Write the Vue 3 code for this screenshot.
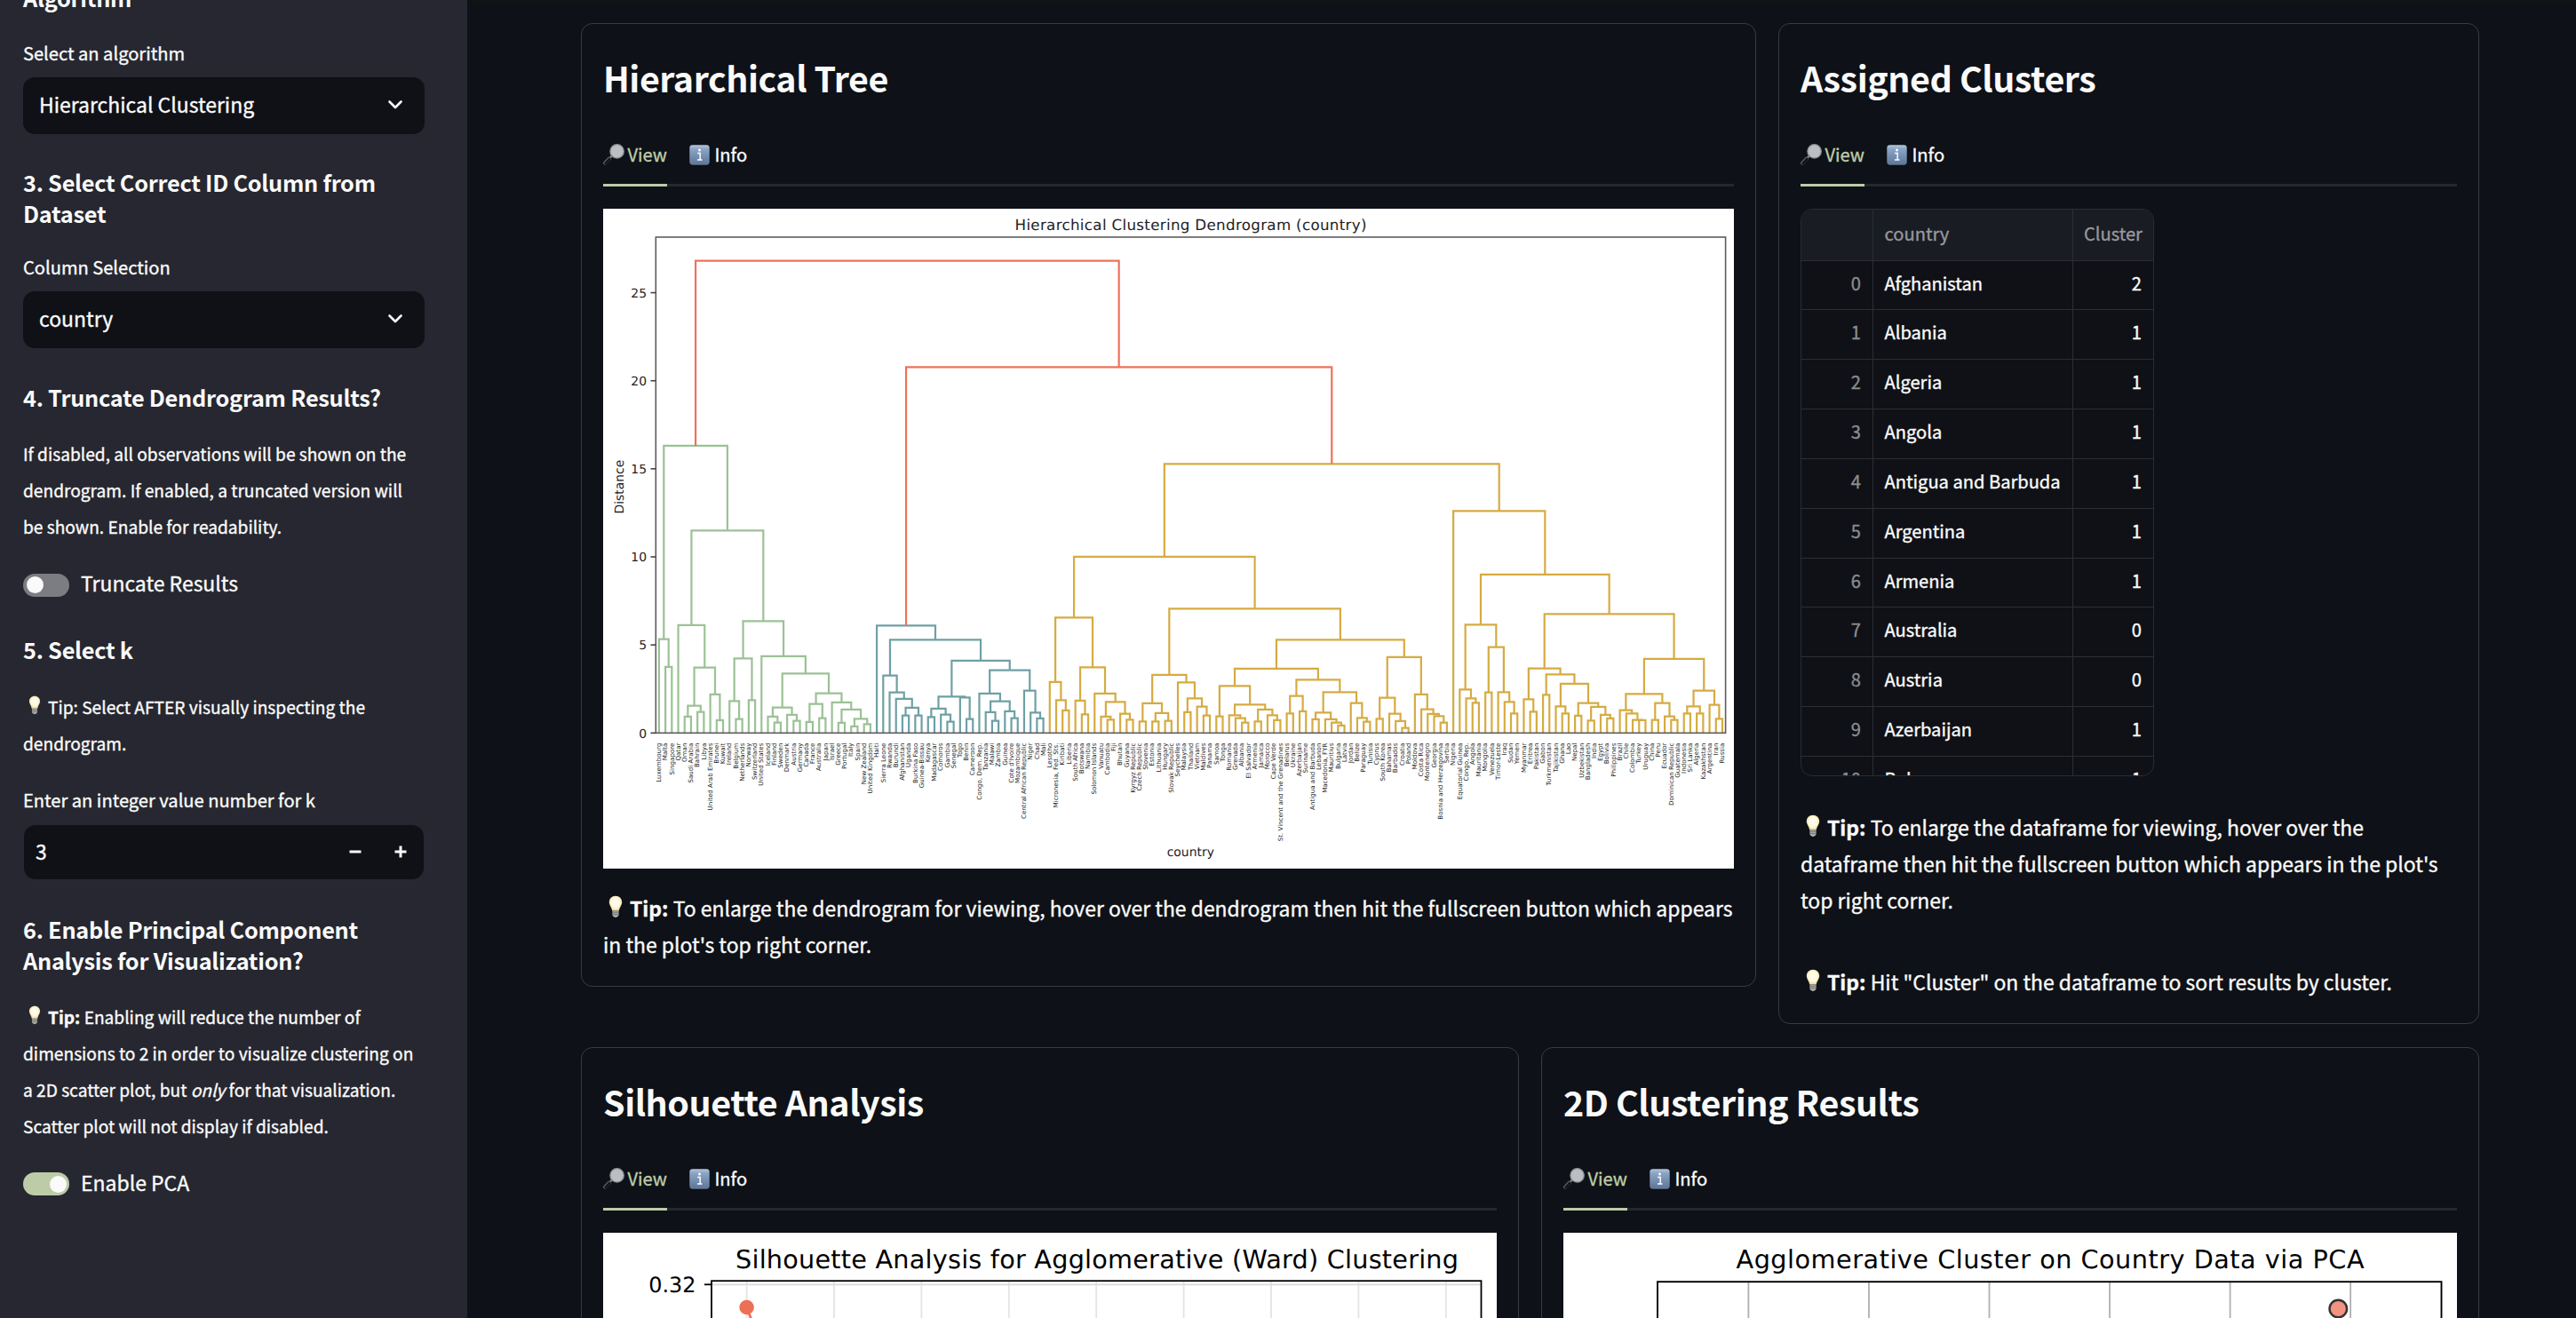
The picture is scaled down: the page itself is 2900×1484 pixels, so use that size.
<script setup>
// Merge tree: a string is a leaf, [left, right, height] is a merge.
// Heights are in chart units, 59.5 units per distance step of 1.
const western = [
  ['Luxembourg', ['Malta', 'Singapore', 223], 317],
  [
    ['Qatar', [[['Oman', 'Saudi Arabia', 55], ['Bahrain', 'Libya', 71], 92], ['United Arab Emirates', ['Brunei', 'Kuwait', 43], 130], 221], 364],
    [
      [['Ireland', ['Belgium', 'Netherlands', 47], 108], ['Norway', 'Switzerland', 111], 252],
      ['United States', [
        [['Iceland', ['Finland', 'Sweden', 35], 55], ['Denmark', ['Austria', 'Germany', 41], 61], 86],
        [
          [['Canada', 'France', 37], ['Australia', 'Japan', 50], 98],
          ['Israel', [['Greece', 'Portugal', 34], [['Italy', 'Spain', 22], ['New Zealand', 'United Kingdom', 30], 48], 79], 103],
          134],
        201], 259],
      378],
    684],
  970]

const african = ['Haiti', [
  ['Sierra Leone', ['Rwanda', ['Burundi', [['Afghanistan', 'Uganda', 59], ['Burkina Faso', 'Guinea-Bissau', 59], 85], 115], 137], 194],
  [
    [[['Kenya', 'Madagascar', 54], ['Comoros', ['Gambia', 'Senegal', 38], 62], 82], ['Togo', ['Benin', 'Cameroon', 47], 120], 123],
    [
      ['Congo, Dem. Rep.', [['Tanzania', ['Malawi', 'Zambia', 41], 70], ['Guinea', ["Cote d'Ivoire", 'Mozambique', 50], 73], 107], 133],
      ['Central African Republic', ['Niger', ['Chad', 'Mali', 49], 69], 143],
      212],
    244],
  315], 363]

const islands = [
  ['Lesotho', ['Micronesia, Fed. Sts.', ['Kiribati', 'Liberia', 76], 111], 172],
  [
    ['South Africa', ['Botswana', 'Namibia', 63], 109],
    ['Solomon Islands', [['Vanuatu', ['Cambodia', 'Fiji', 45], 55], ['Bhutan', ['Guyana', 'Kyrgyz Republic', 45], 65], 105], 133],
    222],
  390]

const middle = [
  [
    [['Czech Republic', 'Slovenia', 39], [['Estonia', 'Lithuania', 39], ['Hungary', 'Slovak Republic', 41], 67], 100],
    ['Seychelles', [['Malaysia', 'Thailand', 70], ['Vietnam', ['Maldives', 'Panama', 59], 89], 117], 171],
    196],
  [
    [
      [
        ['Samoa', 'Tonga', 56],
        [['Romania', ['Grenada', ['Albania', 'El Salvador', 35], 50], 60], [['Armenia', 'Jamaica', 39], ['Morocco', ['Cape Verde', 'St. Vincent and the Grenadines', 43], 60], 79], 96],
        159],
      [
        [['Belarus', 'Ukraine', 66], ['Azerbaijan', 'Suriname', 73], 125],
        [
          [['Antigua and Barbuda', 'Lebanon', 46], ['Macedonia, FYR', ['Mauritius', ['Bulgaria', 'Latvia', 25], 35], 46], 69],
          ['Jordan', ['Belize', ['Paraguay', 'Tunisia', 38], 51], 101],
          138],
        180],
      217],
    [
      [['Cyprus', 'South Korea', 48], ['Bahamas', ['Barbados', ['Croatia', 'Poland', 17], 40], 65], 119],
      ['Moldova', ['Costa Rica', ['Montenegro', ['Georgia', ['Bosnia and Herzegovina', 'Serbia', 35], 57], 64], 80], 130],
      256],
    315],
  420]

const developing = ['Nigeria', [
  [
    ['Equatorial Guinea', ['Congo, Rep.', ['Angola', 'Mauritania', 102], 117], 147],
    [['Mongolia', 'Venezuela', 137], ['Timor-Leste', ['Iraq', ['Sudan', 'Yemen', 66], 105], 138], 290],
    366],
  [
    [
      ['Myanmar', ['Eritrea', 'Pakistan', 72], 114],
      [
        ['Gabon', 'Turkmenistan', 129],
        [
          ['Tajikistan', ['Ghana', 'Lao', 66], 90],
          [['Nepal', 'Uzbekistan', 58], [['Bangladesh', 'India', 42], ['Egypt', ['Bolivia', 'Philippines', 49], 61], 88], 101],
          166],
        198],
      218],
    [
      [
        ['Brazil', ['Chile', ['Colombia', ['Turkey', 'Uruguay', 43], 44], 66], 77],
        [['China', 'Peru', 44], ['Ecuador', ['Dominican Republic', 'Guatemala', 44], 56], 101],
        132],
      [[['Indonesia', 'Sri Lanka', 66], ['Algeria', 'Kazakhstan', 66], 90], ['Argentina', ['Iran', 'Russia', 48], 95], 143],
      250],
    402],
  535], 750]

const LEFT = 59.3
const BASE = 590.3
const STEP = 1204.3 / 167
const leaves = []
const links = []

function place(node, color) {
  if (typeof node === 'string') {
    const x = LEFT + (leaves.length + 0.5) * STEP
    leaves.push({ name: node, x })
    return { x, y: BASE }
  }
  const a = place(node[0], node[3] || color)
  const b = place(node[1], node[4] || color)
  const y = BASE - node[2] / 3
  links.push({ d: `M${a.x.toFixed(2)} ${a.y.toFixed(2)}V${y.toFixed(2)}H${b.x.toFixed(2)}V${b.y.toFixed(2)}`, color })
  return { x: (a.x + b.x) / 2, y }
}

const yellow = [[islands, middle, 595], developing, 909]
place([western, [african, yellow, 1236, '#6fa0a4', '#d6ab42'], 1595, '#9cc196', '#ee7259'], '#ee7259')

const yTicks = [0, 5, 10, 15, 20, 25].map((v) => ({ v, y: BASE - v * 19.83 }))

const rows = [
  ['Afghanistan', 2], ['Albania', 1], ['Algeria', 1], ['Angola', 1], ['Antigua and Barbuda', 1],
  ['Argentina', 1], ['Armenia', 1], ['Australia', 0], ['Austria', 0], ['Azerbaijan', 1], ['Bahamas', 1]
]
const silGrid = Array.from({ length: 9 }, (_, i) => 161.6 + i * 98.4)
const pcaGrid = Array.from({ length: 6 }, (_, i) => 208.4 + i * 135.55)
const cardRows = [
  [
    { id: 'tree', title: 'Hierarchical Tree' },
    { id: 'table', title: 'Assigned Clusters' }
  ],
  [
    { id: 'sil', title: 'Silhouette Analysis' },
    { id: 'pca', title: '2D Clustering Results' }
  ]
]
</script>

<template>
  <svg class="defs" width="0" height="0" aria-hidden="true">
    <defs>
      <linearGradient id="gInfo" x1="0" y1="0" x2="0" y2="1">
        <stop offset="0" stop-color="#b4c6dc" /><stop offset=".2" stop-color="#8ba5c6" /><stop offset="1" stop-color="#5d7596" />
      </linearGradient>
      <radialGradient id="gBulb" cx=".5" cy=".45" r=".55">
        <stop offset="0" stop-color="#fffef8" /><stop offset=".6" stop-color="#fff8df" /><stop offset="1" stop-color="#efd994" />
      </radialGradient>
      <symbol id="bulb" viewBox="0 0 16 26">
        <path d="M8 .8C3.7.8.8 3.7.8 7.8c0 3.4 2.6 5.400 3.400 9.700h7.600c.8-4.300 3.400-6.300 3.400-9.700C15.200 3.700 12.300.8 8 .8z" fill="url(#gBulb)" />
        <path d="M4.400 17.500h7.200v4.300c0 1.500-1 2.200-1.700 2.500-.3.900-3.500.9-3.800 0-.7-.3-1.700-1-1.700-2.500z" fill="#a7a7a7" />
        <path d="M4.400 19.300h7.200M4.400 21.500h7.200" stroke="#6d6d6d" stroke-width=".8" />
      </symbol>
      <symbol id="lens" viewBox="0 0 24 24">
        <path d="M9.600 13.800L7 16.600" stroke="#8b8d92" stroke-width="2.200" />
        <path d="M6.900 16.500L2 21.600" stroke="#5a5a5c" stroke-width="4" stroke-linecap="round" />
        <path d="M7.200 17.100L2.500 22" stroke="#111" stroke-width="2.400" stroke-linecap="round" />
        <circle cx="15.600" cy="8.400" r="7.700" fill="#bdbec1" stroke="#8d9096" stroke-width="1.300" />
      </symbol>
      <symbol id="info" viewBox="0 0 24 24">
        <rect x=".3" y=".3" width="23.400" height="23.400" rx="3.600" fill="url(#gInfo)" />
        <circle cx="12" cy="6.300" r="1.500" fill="#fff" />
        <path d="M9.600 10h3.100v7.500M9.300 17.700h5.800" stroke="#fff" stroke-width="1.500" fill="none" />
      </symbol>
    </defs>
  </svg>
  <div class="app">
    <aside class="sidebar">
      <h3 class="h-cut">Algorithm</h3>
      <div class="label l1">Select an algorithm</div>
      <div class="select">
        <span>Hierarchical Clustering</span>
        <svg width="18" height="14" viewBox="0 0 18 14"><path d="M2.500 3.500L9 10l6.500-6.500" fill="none" stroke="#fafafa" stroke-width="2.600" stroke-linecap="round" stroke-linejoin="round" /></svg>
      </div>
      <h3 class="h3a">3. Select Correct ID Column from<br>Dataset</h3>
      <div class="label l2">Column Selection</div>
      <div class="select">
        <span>country</span>
        <svg width="18" height="14" viewBox="0 0 18 14"><path d="M2.500 3.500L9 10l6.500-6.500" fill="none" stroke="#fafafa" stroke-width="2.600" stroke-linecap="round" stroke-linejoin="round" /></svg>
      </div>
      <h3 class="h4a">4. Truncate Dendrogram Results?</h3>
      <p class="p1">If disabled, all observations will be shown on the<br>dendrogram. If enabled, a truncated version will<br>be shown. Enable for readability.</p>
      <div class="toggle t1"><i class="track"><b></b></i><span>Truncate Results</span></div>
      <h3 class="h5a">5. Select k</h3>
      <p class="p2"><svg class="bulb-s"><use href="#bulb" /></svg>Tip: Select AFTER visually inspecting the<br>dendrogram.</p>
      <div class="label l3">Enter an integer value number for k</div>
      <div class="number">
        <span>3</span>
        <svg width="14" height="14" viewBox="0 0 14 14"><path d="M.5 7h13" stroke="#fafafa" stroke-width="3" /></svg>
        <svg class="plus" width="14" height="14" viewBox="0 0 14 14"><path d="M.5 7h13M7 .5v13" stroke="#fafafa" stroke-width="3" /></svg>
      </div>
      <h3 class="h6a">6. Enable Principal Component<br>Analysis for Visualization?</h3>
      <p class="p3"><svg class="bulb-s"><use href="#bulb" /></svg><strong>Tip:</strong> Enabling will reduce the number of<br>dimensions to 2 in order to visualize clustering on<br>a 2D scatter plot, but <em>only</em> for that visualization.<br>Scatter plot will not display if disabled.</p>
      <div class="toggle t2 on"><i class="track"><b></b></i><span>Enable PCA</span></div>
    </aside>

    <main class="main">
      <div v-for="(group, g) in cardRows" :key="g" class="card-row">
        <section v-for="c in group" :key="c.id" class="card" :class="c.id">
          <h2>{{ c.title }}</h2>
          <nav class="tabs">
            <a class="active"><svg width="24" height="24"><use href="#lens" /></svg><span>View</span></a>
            <a><svg width="23" height="23"><use href="#info" /></svg><span>Info</span></a>
          </nav>

          <template v-if="c.id === 'tree'">
            <svg class="fig" width="1273" height="743" viewBox="0 0 1273 743">
              <rect width="1273" height="743" fill="#fff" />
              <text class="dj" x="463.500" y="23.500" font-size="16.700" textLength="396" fill="#222">Hierarchical Clustering Dendrogram (country)</text>
              <path v-for="(l, i) in links" :key="i" :d="l.d" :stroke="l.color" stroke-width="2.200" fill="none" />
              <rect x="59.300" y="32" width="1204.300" height="558.300" fill="none" stroke="#5c5c5c" stroke-width="1.600" />
              <g v-for="t in yTicks" :key="t.v">
                <path :d="`M53.500 ${t.y}h6`" stroke="#444" stroke-width="1.600" />
                <text class="dj" x="49" :y="t.y + 5.200" font-size="13.900" text-anchor="end" fill="#222">{{ t.v }}</text>
              </g>
              <text class="dj" transform="translate(22.500 343.500) rotate(-90)" font-size="13.900" fill="#222">Distance</text>
              <text class="dj" x="661.300" y="729" font-size="13.900" text-anchor="middle" fill="#222">country</text>
              <text v-for="l in leaves" :key="l.name" class="dj leaf" :transform="`translate(${(l.x + 2.200).toFixed(2)} 601.600) rotate(-90)`" text-anchor="end">{{ l.name }}</text>
            </svg>
            <p class="tip"><svg class="bulb"><use href="#bulb" /></svg><strong>Tip:</strong> To enlarge the dendrogram for viewing, hover over the dendrogram then hit the fullscreen button which appears<br>in the plot's top right corner.</p>
          </template>

          <template v-else-if="c.id === 'table'">
            <div class="grid">
              <div class="row head"><span></span><span>country</span><span>Cluster</span></div>
              <div v-for="(r, i) in rows" :key="i" class="row"><span>{{ i }}</span><span>{{ r[0] }}</span><span>{{ r[1] }}</span></div>
            </div>
            <p class="tip below-grid"><svg class="bulb"><use href="#bulb" /></svg><strong>Tip:</strong> To enlarge the dataframe for viewing, hover over the<br>dataframe then hit the fullscreen button which appears in the plot's<br>top right corner.</p>
            <p class="tip second"><svg class="bulb"><use href="#bulb" /></svg><strong>Tip:</strong> Hit "Cluster" on the dataframe to sort results by cluster.</p>
          </template>

          <svg v-else-if="c.id === 'sil'" class="fig" width="1006" height="700" viewBox="0 0 1006 700">
            <rect width="1006" height="700" fill="#fff" />
            <text class="dj" x="149" y="39.500" font-size="28.700" textLength="814" fill="#000">Silhouette Analysis for Agglomerative (Ward) Clustering</text>
            <path v-for="x in silGrid" :key="x" :d="`M${x} 54V700`" stroke="#e4e4e4" stroke-width="1.800" />
            <path d="M122 58.300H988" stroke="#dadada" stroke-width="1.800" />
            <path d="M114 58.300h8" stroke="#000" stroke-width="1.800" />
            <rect x="122" y="54.200" width="866.500" height="660" fill="none" stroke="#000" stroke-width="1.800" />
            <text class="dj" x="104.500" y="66.800" font-size="23.900" text-anchor="end" fill="#000">0.32</text>
            <path d="M161.600 84L170 106" stroke="#ee7259" stroke-width="3" />
            <circle cx="161.600" cy="84" r="8.300" fill="#ed6f55" />
          </svg>

          <svg v-else class="fig" width="1006" height="700" viewBox="0 0 1006 700">
            <rect width="1006" height="700" fill="#fff" />
            <text class="dj" x="194.500" y="39.500" font-size="28.700" textLength="707" fill="#000">Agglomerative Cluster on Country Data via PCA</text>
            <path v-for="x in pcaGrid" :key="x" :d="`M${x} 55V700`" stroke="#b0b0b0" stroke-width="1.800" />
            <rect x="106" y="55.200" width="882.500" height="660" fill="none" stroke="#000" stroke-width="1.900" />
            <circle cx="872.300" cy="85.500" r="9.800" fill="#f19380" stroke="#333" stroke-width="2.400" />
          </svg>
        </section>
      </div>
    </main>
  </div>
</template>

<style>
body { background: #0e1117; }
</style>

<style scoped>
.defs { display: block; width: 0; height: 0; }
.app {
  display: flex;
  width: 2900px;
  height: 1484px;
  overflow: hidden;
  background: #0e1117;
  color: #fafafa;
  font-family: "Noto Sans CJK SC", "Noto Sans", sans-serif;
  -webkit-text-stroke: .35px;
}
h2, h3, p { margin: 0; white-space: nowrap; -webkit-text-stroke: inherit; }
.sidebar { box-sizing: border-box; width: 526px; flex: none; background: #262730; padding: 0 48px 0 26px; height: 1484px; overflow: hidden; }
.sidebar h3 { font-size: 25.3px; line-height: 34.8px; font-weight: 700; letter-spacing: -.26px; -webkit-text-stroke: 0; }
.sidebar p { font-size: 19.15px; line-height: 40.9px; }
.label { font-size: 20.1px; line-height: 36px; }
.h-cut { margin-top: -20px; }
.l1 { margin-top: 27.4px; }
.l2 { margin-top: 25.1px; }
.l3 { margin-top: 25.1px; }
.h3a { margin-top: 37.5px; }
.h4a { margin-top: 38px; }
.h5a { margin-top: 42.2px; }
.h6a { margin-top: 38.4px; }
.p1 { margin-top: 26.5px; }
.p2 { margin-top: 26.8px; }
.p3 { margin-top: 26.8px; }
.select {
  display: flex; align-items: center; justify-content: space-between;
  box-sizing: border-box; height: 64px; margin-top: 8.8px; padding: 0 24px 0 18px;
  border-radius: 13px; background: #101116; font-size: 22.96px; line-height: 56px;
}
.select span { margin-top: -4.5px; }
.select svg { margin-top: -2px; }
.toggle { display: flex; align-items: center; gap: 13px; height: 26px; font-size: 22.96px; line-height: 26px; }
.toggle span { margin-top: -5px; }
.t1 { margin-top: 32px; }
.t2 { margin-top: 31.6px; }
.track { display: flex; align-items: center; width: 52px; height: 26px; box-sizing: border-box; padding: 0 3.5px; border-radius: 13px; background: #7c7d82; }
.track b { width: 19px; height: 19px; border-radius: 50%; background: #fafafa; }
.on .track { background: #bdcca7; justify-content: flex-end; }
.number {
  display: flex; align-items: center; height: 61px; margin: 10.8px 1px 0; padding: 0 19px 0 13px;
  border-radius: 13px; background: #101116; font-size: 22.96px;
}
.number span { flex: 1; margin-top: -4.5px; }
.number svg { margin-top: -1px; }
.number .plus { margin-left: 37px; }
.bulb-s { width: 14px; height: 22px; margin: 0 8px 0 6px; vertical-align: -1px; }
.bulb { width: 16px; height: 26px; margin: 0 8px 0 6px; vertical-align: -2px; }

.main { box-sizing: border-box; width: 2374px; padding: 21px 109px 0 128px; border-top: 5px solid #111216; }
.card-row { display: flex; justify-content: space-between; align-items: flex-start; height: 1153px; }
.card { box-sizing: border-box; border: 1px solid #393b40; border-radius: 13px; padding: 0 24px; }
.tree { width: 1323px; height: 1085px; }
.table { width: 789px; height: 1127px; }
.sil { width: 1056px; height: 700px; }
.pca { width: 1056px; height: 700px; }
.card h2 { font-size: 39.4px; line-height: 60px; font-weight: 700; letter-spacing: -.45px; margin-top: 30px; -webkit-text-stroke: 0; }
.tabs { display: flex; gap: 25.5px; height: 57.5px; margin-top: 32.5px; border-bottom: 3px solid #262730; font-size: 20.1px; line-height: 57px; }
.tabs a { display: flex; align-items: center; height: 60.5px; box-sizing: border-box; color: #fafafa; border-bottom: 3px solid transparent; }
.tabs a svg { margin-right: 3.5px; margin-top: -8px; }
.tabs a:nth-child(2) svg { margin-right: 5px; }
.tabs a span { margin-top: -9px; }
.tabs .active { color: #bdcca7; border-bottom-color: #bdcca7; }
.fig { display: block; margin-top: 25px; -webkit-text-stroke: 0; }
.tip { font-size: 22.93px; line-height: 40.9px; margin-top: 24px; }
.tip.below-grid { margin-top: 37px; }
.tip.second { margin-top: 51px; }
.dj { font-family: "DejaVu Sans", sans-serif; text-rendering: geometricPrecision; }
.leaf { font-size: 7.1px; fill: #222; }

.grid { box-sizing: border-box; width: 398px; height: 639px; margin-top: 25px; border: 1px solid #2a2c32; border-radius: 13px; overflow: hidden; background: #0f1116; font-size: 20.1px; }
.row { display: grid; grid-template-columns: 81px 224.500px 1fr; height: 55.85px; line-height: 50px; white-space: nowrap; }
.row span { box-sizing: border-box; min-width: 0; border-bottom: 1px solid #2c2e34; border-right: 1px solid #2c2e34; padding: 0 13px 0 12.5px; }
.row span:first-child { text-align: right; color: #8b8c91; }
.row span:last-child { text-align: right; border-right: 0; }
.head { height: 57.5px; line-height: 54px; background: #1a1c23; color: #97989d; }
</style>
